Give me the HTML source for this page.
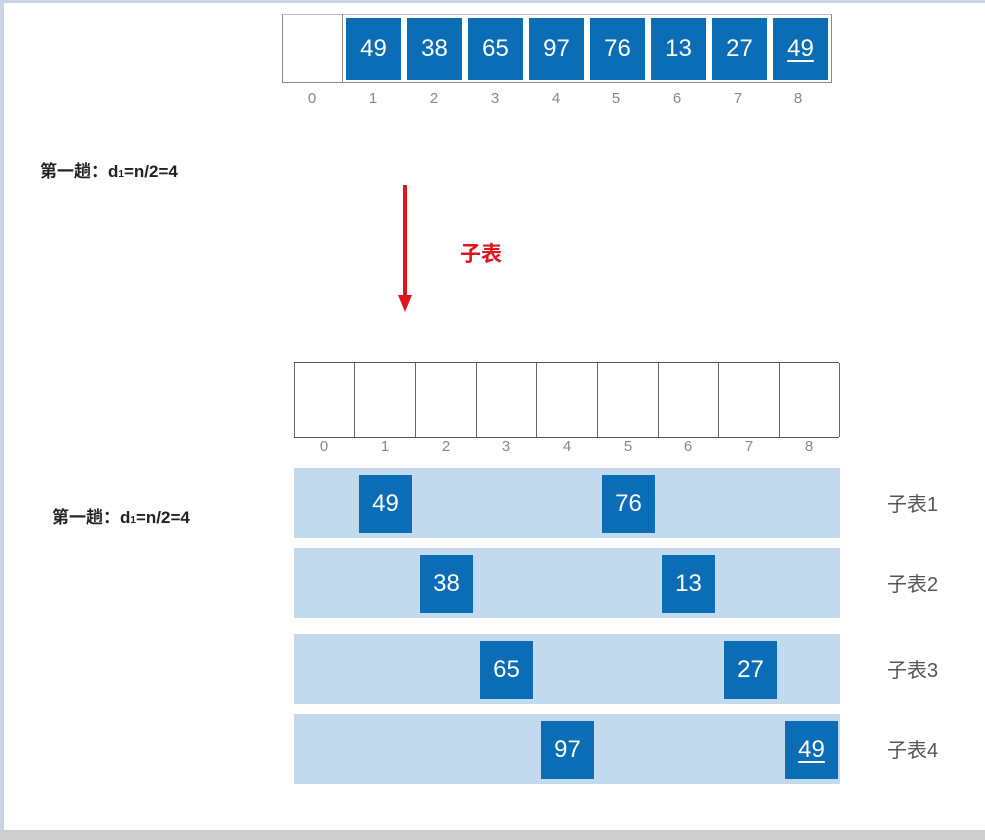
<!DOCTYPE html>
<html><head><meta charset="utf-8"><style>
body{margin:0;width:985px;height:840px;position:relative;background:#fff;overflow:hidden;font-family:"Liberation Sans","Noto Sans CJK SC",sans-serif}
.a{position:absolute}
.b{position:absolute;background:#0b6db5;color:#fff;font-size:24px;text-align:center;box-sizing:border-box}
.u{text-decoration:underline;text-decoration-thickness:2px;text-underline-offset:4px}
.idx{position:absolute;color:#888;font-size:15px;width:20px;text-align:center}
.row{position:absolute;left:294px;width:546px;height:70px;background:#c2d9ee}
.lab{position:absolute;left:887px;color:#555;font-size:20px}
.cell{position:absolute;border-left:1px solid #666;height:74px;top:0}
</style></head><body>
<div class="a" style="left:0;top:0;width:985px;height:3px;background:#c9d4e6"></div>
<div class="a" style="left:0;top:0;width:4px;height:840px;background:#c9d4e6"></div>
<div class="a" style="left:0;top:830px;width:985px;height:10px;background:#cfcfcf"></div>

<div class="a" style="left:282px;top:14px;width:548px;height:67px;border:1px solid #888;border-top-color:#bbb;background:#fff"></div>
<div class="a" style="left:342px;top:14px;width:1px;height:68px;background:#888"></div>
<div class="b" style="left:346px;top:18px;width:55px;height:62px;line-height:62px">49</div>
<div class="b" style="left:407px;top:18px;width:55px;height:62px;line-height:62px">38</div>
<div class="b" style="left:468px;top:18px;width:55px;height:62px;line-height:62px">65</div>
<div class="b" style="left:529px;top:18px;width:55px;height:62px;line-height:62px">97</div>
<div class="b" style="left:590px;top:18px;width:55px;height:62px;line-height:62px">76</div>
<div class="b" style="left:651px;top:18px;width:55px;height:62px;line-height:62px">13</div>
<div class="b" style="left:712px;top:18px;width:55px;height:62px;line-height:62px">27</div>
<div class="b" style="left:773px;top:18px;width:55px;height:62px;line-height:62px"><span class="u">49</span></div>
<div class="idx" style="left:302px;top:90px">0</div><div class="idx" style="left:363px;top:90px">1</div><div class="idx" style="left:424px;top:90px">2</div><div class="idx" style="left:485px;top:90px">3</div><div class="idx" style="left:546px;top:90px">4</div><div class="idx" style="left:606px;top:90px">5</div><div class="idx" style="left:667px;top:90px">6</div><div class="idx" style="left:728px;top:90px">7</div><div class="idx" style="left:788px;top:90px">8</div>

<div class="a" style="left:40px;top:157px;font-size:17px;font-weight:bold;color:#222">第一趟：d<span style="font-size:10px">1</span>=n/2=4</div>

<div class="a" style="left:403px;top:185px;width:4px;height:112px;background:#e0141c"></div>
<div class="a" style="left:398px;top:295px;width:0;height:0;border-left:7px solid transparent;border-right:7px solid transparent;border-top:17px solid #e0141c"></div>
<div class="a" style="left:460px;top:238px;font-size:21px;font-weight:bold;color:#e0141c">子表</div>

<div class="a" style="left:294px;top:362px;width:545px;height:74px;border:1px solid #555;border-left:none;border-right:none">
<div class="cell" style="left:0"></div><div class="cell" style="left:60px"></div><div class="cell" style="left:121px"></div><div class="cell" style="left:182px"></div><div class="cell" style="left:242px"></div><div class="cell" style="left:303px"></div><div class="cell" style="left:364px"></div><div class="cell" style="left:424px"></div><div class="cell" style="left:485px"></div><div class="cell" style="left:545px"></div>
</div>
<div class="idx" style="left:314px;top:438px">0</div><div class="idx" style="left:375px;top:438px">1</div><div class="idx" style="left:436px;top:438px">2</div><div class="idx" style="left:496px;top:438px">3</div><div class="idx" style="left:557px;top:438px">4</div><div class="idx" style="left:618px;top:438px">5</div><div class="idx" style="left:678px;top:438px">6</div><div class="idx" style="left:739px;top:438px">7</div><div class="idx" style="left:799px;top:438px">8</div>

<div class="row" style="top:468px"></div>
<div class="row" style="top:548px"></div>
<div class="row" style="top:634px"></div>
<div class="row" style="top:714px"></div>

<div class="b" style="left:359px;top:475px;width:53px;height:58px;line-height:58px">49</div>
<div class="b" style="left:602px;top:475px;width:53px;height:58px;line-height:58px">76</div>
<div class="b" style="left:420px;top:555px;width:53px;height:58px;line-height:58px">38</div>
<div class="b" style="left:662px;top:555px;width:53px;height:58px;line-height:58px">13</div>
<div class="b" style="left:480px;top:641px;width:53px;height:58px;line-height:58px">65</div>
<div class="b" style="left:724px;top:641px;width:53px;height:58px;line-height:58px">27</div>
<div class="b" style="left:541px;top:721px;width:53px;height:58px;line-height:58px">97</div>
<div class="b" style="left:785px;top:721px;width:53px;height:58px;line-height:58px"><span class="u">49</span></div>

<div class="lab" style="top:488px">子表1</div>
<div class="lab" style="top:568px">子表2</div>
<div class="lab" style="top:654px">子表3</div>
<div class="lab" style="top:734px">子表4</div>

<div class="a" style="left:52px;top:503px;font-size:17px;font-weight:bold;color:#222">第一趟：d<span style="font-size:10px">1</span>=n/2=4</div>
</body></html>
